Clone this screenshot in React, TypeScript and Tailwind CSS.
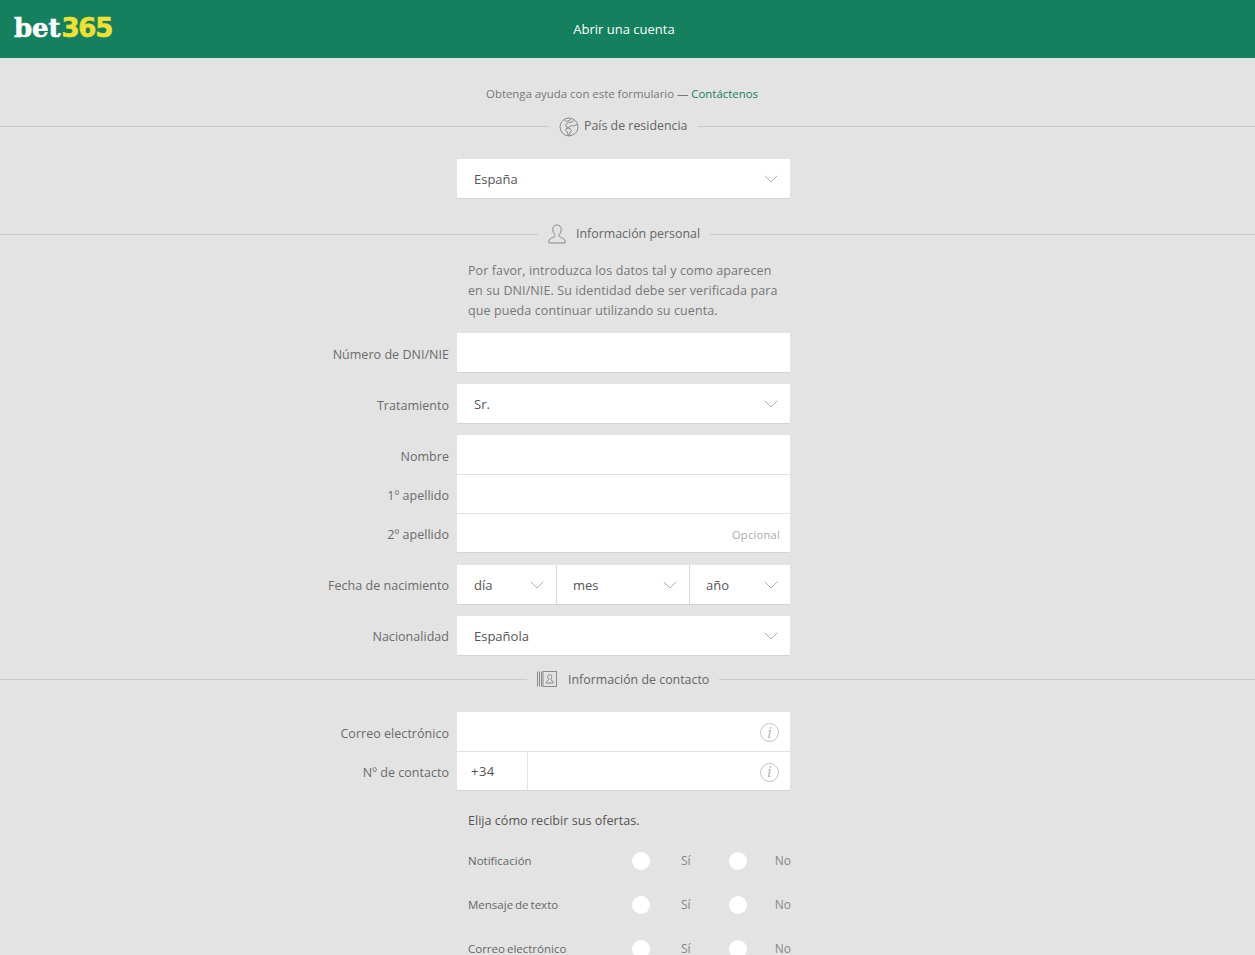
import React from 'react';
import { ChevronDown } from 'lucide-react';

const GlobeIcon = () => (
    <svg width="20" height="20" viewBox="0 0 20 20" fill="none" stroke="#808080" strokeWidth="0.9" className="mt-[2px]">
        <circle cx="10" cy="10" r="9" />
        <path d="M5.500 2.800l2 1.700 2.500-1 2-1.500M15 3.500l-1.800 1.300-3.700.7-3 2.200 1 2.300 2.500.3 2.500-1.800 2 .5 3.500-1.500M7.500 11l3.500.5 1.500 2-1.500 1.500-.7 3.500-1.300-.5-.5-3-1.800-1.500z" />
    </svg>
);

const UserIcon = () => (
    <svg width="18" height="20" viewBox="0 0 18 20" fill="none" stroke="#808080" strokeWidth="0.9">
        <path d="M9 1c-2.800 0-4.200 2-4.200 4.500 0 2 .8 3.700 1.800 4.800.5.600.5 1.800 0 2.300-1 1-5.600 2-5.600 4v2.400h16v-2.400c0-2-4.600-3-5.600-4-.5-.5-.5-1.700 0-2.300 1-1.100 1.800-2.800 1.800-4.800C13.200 3 11.800 1 9 1z" />
    </svg>
);

const ContactBookIcon = () => (
    <svg width="20" height="18" viewBox="0 0 20 18" fill="none" stroke="#808080" strokeWidth="0.9">
        <path d="M.5 1.500v15M2.500 1.500v15M4.500 1.500v15" />
        <rect x="6" y="1.500" width="13.500" height="15" />
        <path d="M12.700 4.500c-1.300 0-2 1-2 2.200 0 1 .4 1.700.8 2.200.3.400.3 1 0 1.200-.5.400-2 .8-2 1.600v1.300h6.500v-1.300c0-.8-1.500-1.200-2-1.600-.3-.2-.3-.8 0-1.200.4-.5.800-1.200.8-2.200 0-1.200-.7-2.200-2.100-2.200z" />
    </svg>
);

const InfoIcon = () => (
    <span className="flex h-[19px] w-[19px] items-center justify-center rounded-full border border-[#c4c4c4] font-['Liberation_Serif',serif] text-[16px] italic leading-none text-[#b5b5b5]">
        i
    </span>
);

const Chevron = () => (
    <ChevronDown size={24} strokeWidth={0.8} className="shrink-0 text-[#9a9a9a]" />
);

const SectionTitle = ({ icon, title, leftLine, gap }: { icon: React.ReactNode; title: string; leftLine: string; gap: string }) => (
    <div className="flex h-[20px] items-center">
        <div className={`h-px bg-[#c9c9c9] ${leftLine}`} />
        <div className="flex items-center px-[10px]">
            {icon}
            <span className={`${gap} text-[12.400px] text-[#666]`}>{title}</span>
        </div>
        <div className="h-px flex-1 bg-[#c9c9c9]" />
    </div>
);

const Row = ({ label, labelPad = 'pt-[4px]', children }: { label?: string; labelPad?: string; children: React.ReactNode }) => (
    <div className="flex items-center">
        <div className={`w-[449px] text-right text-[12.500px] tracking-[0.03px] text-[#6b6b6b] ${labelPad}`}>{label}</div>
        <div className="ml-[8px] w-[333px]">{children}</div>
    </div>
);

const SelectBox = ({ value }: { value: string }) => (
    <div className="flex h-[40px] items-center justify-between border-b border-[#d4d4d4] bg-white pl-[17px] pr-[7px] text-[13px] text-[#555]">
        <span className="pt-[2px]">{value}</span>
        <Chevron />
    </div>
);

const StackedField = ({ label, height, children, last }: { label: string; height: string; children?: React.ReactNode; last?: boolean }) => (
    <Row label={label}>
        <div className={`flex items-center justify-end border-b bg-white pr-[10px] pt-[2px] ${height} ${last ? 'border-[#d4d4d4]' : 'border-[#e2e2e2]'}`}>
            {children}
        </div>
    </Row>
);

const DatePart = ({ value, width }: { value: string; width: string }) => (
    <div className={`flex h-full items-center justify-between border-r border-[#d9d9d9] pr-[7px] last:border-r-0 ${width}`}>
        <span className="pt-[2px]">{value}</span>
        <Chevron />
    </div>
);

const OfferRow = ({ label }: { label: string }) => (
    <div className="ml-[468px] flex h-[44px] w-[323px] items-center text-[11.500px] text-[#666] [word-spacing:-1px]">
        <span className="w-[164px]">{label}</span>
        <span className="h-[18px] w-[18px] rounded-full bg-white" />
        <span className="ml-[31px] w-[48px] text-[12px] text-[#888]">Sí</span>
        <span className="h-[18px] w-[18px] rounded-full bg-white" />
        <span className="ml-auto text-[12px] text-[#888]">No</span>
    </div>
);

export default function App() {
    return (
        <div className="h-[955px] overflow-hidden bg-[#e3e3e3] font-['Open_Sans',sans-serif]">
            <header className="relative flex h-[58px] items-center justify-center bg-[#14805e] pr-[7px] pt-px text-[13px] text-white">
                <span className="absolute left-[14px] top-[11px] flex text-[26px] font-bold leading-[34px] [-webkit-text-stroke:0.6px_currentColor]">
                    <span className="font-['DejaVu_Serif',serif] tracking-[-0.1px]">bet</span>
                    <span className="ml-px font-['DejaVu_Sans',sans-serif] tracking-[-1.200px] text-[#f0e02f]">365</span>
                </span>
                Abrir una cuenta
            </header>

            <p className="mt-[27px] pr-[11px] text-center text-[11.400px] leading-[18px] text-[#777]">
                Obtenga ayuda con este formulario — <span className="text-[#14805e]">Contáctenos</span>
            </p>

            <div className="mt-[13px]">
                <SectionTitle icon={<GlobeIcon />} title="País de residencia" leftLine="w-[549px]" gap="ml-[5px]" />
            </div>

            <div className="mt-[23px]">
                <Row><SelectBox value="España" /></Row>
            </div>

            <div className="mt-[25px]">
                <SectionTitle icon={<UserIcon />} title="Información personal" leftLine="w-[538px]" gap="ml-[10px]" />
            </div>

            <p className="ml-[468px] mt-[17px] w-[320px] text-[12.500px] leading-[20px] tracking-[0.1px] text-[#777]">
                Por favor, introduzca los datos tal y como aparecen en su DNI/NIE. Su identidad debe ser verificada para que pueda continuar utilizando su cuenta.
            </p>

            <div className="mt-[12px] flex flex-col gap-[11px]">
                <Row label="Número de DNI/NIE">
                    <div className="h-[40px] border-b border-[#d4d4d4] bg-white" />
                </Row>
                <Row label="Tratamiento"><SelectBox value="Sr." /></Row>
                <div className="mb-px">
                    <StackedField label="Nombre" height="h-[40px]" />
                    <StackedField label="1º apellido" height="h-[39px]" />
                    <StackedField label="2º apellido" height="h-[39px]" last>
                        <span className="pt-[2px] text-[11px] tracking-[0.3px] text-[#aaa]">Opcional</span>
                    </StackedField>
                </div>
                <Row label="Fecha de nacimiento" labelPad="pt-[2px]">
                    <div className="flex h-[40px] border-b border-[#d4d4d4] bg-white text-[13px] text-[#555]">
                        <DatePart value="día" width="w-[100px] pl-[17px]" />
                        <DatePart value="mes" width="w-[133px] pl-[16px]" />
                        <DatePart value="año" width="w-[100px] pl-[16px]" />
                    </div>
                </Row>
                <Row label="Nacionalidad" labelPad="pt-[2px]"><SelectBox value="Española" /></Row>
            </div>

            <div className="mt-[13px]">
                <SectionTitle icon={<ContactBookIcon />} title="Información de contacto" leftLine="w-[527px]" gap="ml-[11px] pt-[2px]" />
            </div>

            <div className="mt-[23px]">
                <StackedField label="Correo electrónico" height="h-[40px]"><span className="mr-px"><InfoIcon /></span></StackedField>
                <Row label="Nº de contacto">
                    <div className="flex h-[39px] items-center border-b border-[#d4d4d4] bg-white pr-[11px] text-[13px] tracking-[0.5px] text-[#555]">
                        <span className="flex h-full w-[71px] items-center border-r border-[#e2e2e2] pl-[14px] pt-[2px]">+34</span>
                        <span className="ml-auto pt-[2px]"><InfoIcon /></span>
                    </div>
                </Row>
            </div>

            <p className="ml-[468px] mt-[21px] text-[12.600px] leading-[18px] text-[#555]">Elija cómo recibir sus ofertas.</p>

            <div className="mt-[9px]">
                <OfferRow label="Notificación" />
                <OfferRow label="Mensaje de texto" />
                <OfferRow label="Correo electrónico" />
            </div>
        </div>
    );
}
